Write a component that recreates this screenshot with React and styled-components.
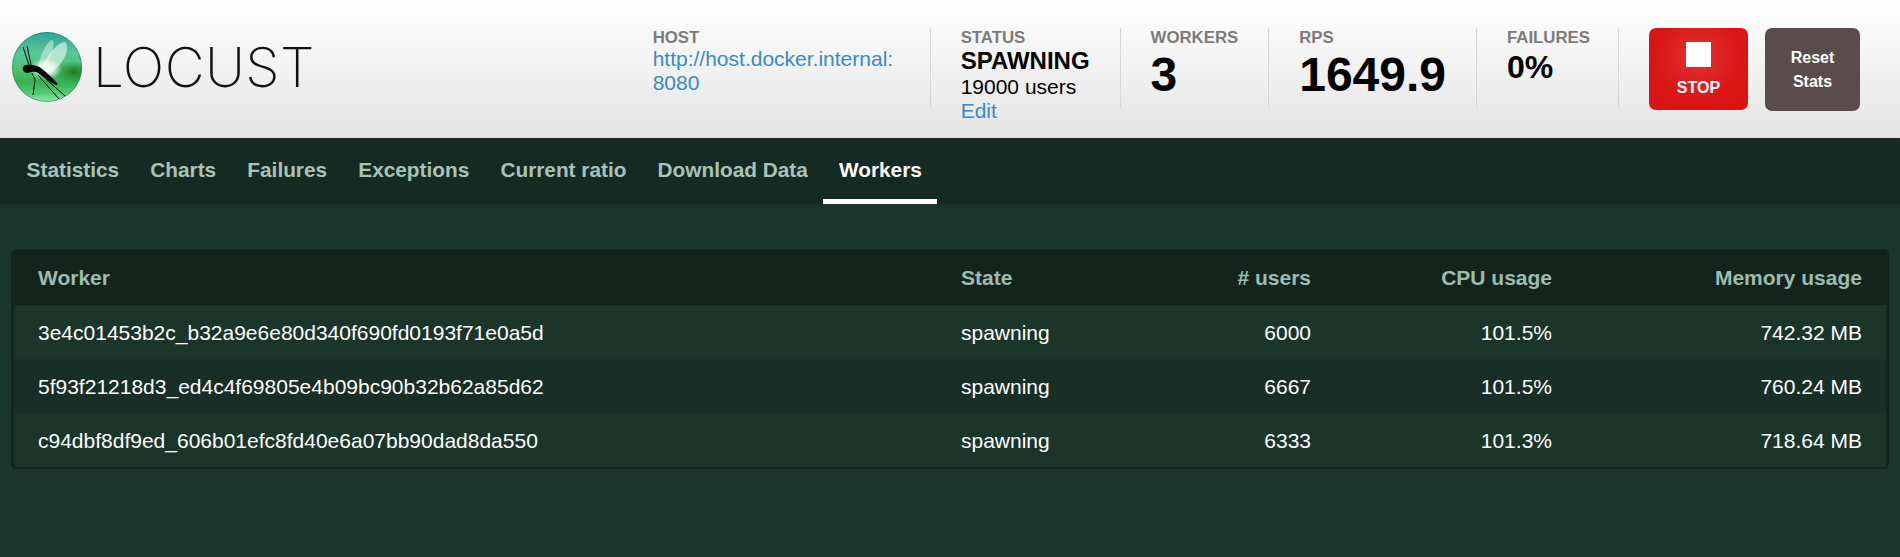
import styled, { createGlobalStyle } from "styled-components";

const GlobalStyle = createGlobalStyle`
  html, body {
    margin: 0;
    padding: 0;
    height: 100%;
    background: #1a352b;
    font-family: "Liberation Sans", Arial, sans-serif;
  }
`;

const Page = styled.div`
  min-height: 557px;
  background: #1a352b;
`;

const Header = styled.header`
  display: flex;
  height: 138px;
  padding: 28px 40px 0 12px;
  box-sizing: border-box;
  background: linear-gradient(to bottom, #ffffff 0%, #e4e4e4 100%);
`;

const Brand = styled.div`
  display: flex;
  align-items: center;
  gap: 11px;
  height: 78px;
`;

const Wordmark = styled.span`
  font-family: "Inter", "Lato", sans-serif;
  font-weight: 250;
  font-size: 55px;
  line-height: 78px;
  letter-spacing: 0.4px;
  color: #111;
`;

const Stats = styled.div`
  display: flex;
  align-items: flex-start;
  margin-left: auto;
`;

const Stat = styled.div`
  height: 80px;
  padding: 0 30px;
  border-right: 1px solid #d6d6d6;
  color: #000;
`;

const HostStat = styled(Stat)`
  width: 247px;
  padding-left: 0;
  box-sizing: content-box;
`;

const FailuresStat = styled(Stat)`
  padding-right: 28px;
`;

const Label = styled.div`
  padding-top: 1px;
  font-size: 16.8px;
  font-weight: 700;
  line-height: 18px;
  color: #7b7b7b;
`;

const Link = styled.a`
  font-size: 21px;
  line-height: 24px;
  display: block;
  color: #3a8bc4;
  text-decoration: none;
`;

const StatusName = styled.div`
  font-size: 24px;
  font-weight: 700;
  line-height: 28px;
`;

const Users = styled.div`
  font-size: 21px;
  line-height: 24px;
`;

const Value = styled.div`
  font-weight: 700;
  font-size: ${(p) => p.$size}px;
  line-height: ${(p) => p.$size + 8}px;
`;

const Buttons = styled.div`
  display: flex;
  align-items: flex-start;
  gap: 17px;
  margin-left: 30px;
`;

const StopButton = styled.button`
  display: flex;
  flex-direction: column;
  align-items: center;
  width: 99px;
  height: 82px;
  padding: 14px 0 0;
  border: 0;
  border-radius: 7px;
  background: radial-gradient(circle at 50% 35%, #e23232 0%, #d91515 60%, #d81414 100%);
  color: #fff;
  font-family: inherit;
  font-size: 16px;
  font-weight: 700;
`;

const StopSquare = styled.span`
  display: block;
  width: 25px;
  height: 25px;
  margin-bottom: 12px;
  background: #fff;
`;

const ResetButton = styled.button`
  width: 95px;
  height: 83px;
  padding: 0;
  border: 0;
  border-radius: 7px;
  background: #5a4c4c;
  color: #fff;
  font-family: inherit;
  font-size: 16px;
  font-weight: 700;
  line-height: 24px;
`;

const Nav = styled.nav`
  display: flex;
  height: 66px;
  padding-left: 11px;
  background: #152a22;
`;

const Tab = styled.a`
  display: flex;
  align-items: center;
  padding: 3px 15.6px 0;
  box-sizing: border-box;
  font-size: 20.8px;
  font-weight: 700;
  color: ${(p) => (p.$active ? "#fff" : "#a9c3b7")};
  border-bottom: 5px solid ${(p) => (p.$active ? "#fff" : "transparent")};
`;

const Content = styled.main`
  padding: 45px 11px 0 11px;
`;

const TableBox = styled.div`
  border: solid #14261f;
  border-width: 0 3px 2px 3px;
  border-radius: 5px;
  overflow: hidden;
`;

const Table = styled.table`
  width: 100%;
  border-collapse: collapse;
  table-layout: fixed;
  font-size: 21px;
`;

const Col = styled.col`
  width: ${(p) => p.$width}px;
`;

const HeadRow = styled.tr`
  height: 56px;
  background: #13241d;
`;

const Th = styled.th`
  padding: 1px 24px 0;
  font-weight: 700;
  color: #9cbcae;
  text-align: ${(p) => (p.$right ? "right" : "left")};
`;

const Row = styled.tr`
  height: 54px;
  background: ${(p) => (p.$alt ? "#182e26" : "#1b352b")};
`;

const Td = styled.td`
  padding: 1px 24px 0;
  color: #fff;
  text-align: ${(p) => (p.$right ? "right" : "left")};
`;

const tabs = ["Statistics", "Charts", "Failures", "Exceptions", "Current ratio", "Download Data", "Workers"];

const workers = [
  { id: "3e4c01453b2c_b32a9e6e80d340f690fd0193f71e0a5d", state: "spawning", users: 6000, cpu: "101.5%", mem: "742.32 MB" },
  { id: "5f93f21218d3_ed4c4f69805e4b09bc90b32b62a85d62", state: "spawning", users: 6667, cpu: "101.5%", mem: "760.24 MB" },
  { id: "c94dbf8df9ed_606b01efc8fd40e6a07bb90dad8da550", state: "spawning", users: 6333, cpu: "101.3%", mem: "718.64 MB" },
];

function Logo() {
  return (
    <svg width="70" height="70" viewBox="0 0 70 70">
      <defs>
        <linearGradient id="ball" x1="0" y1="0" x2="0" y2="1">
          <stop offset="0" stopColor="#2aa598" />
          <stop offset="0.3" stopColor="#5cc69a" />
          <stop offset="0.55" stopColor="#4cc06a" />
          <stop offset="0.72" stopColor="#36b052" />
          <stop offset="0.88" stopColor="#55cc76" />
          <stop offset="1" stopColor="#96eab0" />
        </linearGradient>
        <radialGradient id="shade" cx="0.5" cy="0.5" r="0.5">
          <stop offset="0" stopColor="#17761a" stopOpacity="0.9" />
          <stop offset="1" stopColor="#17761a" stopOpacity="0" />
        </radialGradient>
        <radialGradient id="glow" cx="0.5" cy="0.5" r="0.5">
          <stop offset="0" stopColor="#fff" stopOpacity="1" />
          <stop offset="0.5" stopColor="#fff" stopOpacity="0.7" />
          <stop offset="1" stopColor="#fff" stopOpacity="0" />
        </radialGradient>
        <clipPath id="ballClip">
          <circle cx="35" cy="35" r="35" />
        </clipPath>
      </defs>
      <circle cx="35" cy="35" r="35" fill="url(#ball)" />
      <g clipPath="url(#ballClip)">
        <ellipse cx="62" cy="40" rx="20" ry="11" fill="url(#shade)" />
      </g>
      <circle cx="35" cy="35" r="34.5" fill="none" stroke="#0f6a55" strokeOpacity="0.45" />
      <path d="M26 35 C28 24 35 9 40 8 C44 9 40 25 31 37 Z" fill="#fff" fillOpacity="0.42" />
      <path d="M29 38 C33 26 45 10 53 10 C58 13 55 30 38 41 Z" fill="#fff" fillOpacity="0.55" />
      <ellipse cx="34" cy="37" rx="16" ry="11" fill="url(#glow)" />
      <path d="M11 35 C13 32 17 33 20 33 C23 33 26 34 29 36 C34 40 40 45 44 50 C47 53 45 54 42 52 C37 49 32 46 26 41 C23 39 20 40 16 41 C12 41 10 38 11 35 Z" fill="#0a0a0a" />
      <g stroke="#0a0a0a" strokeWidth="1" fill="none">
        <path d="M17 33 L11 15" />
        <path d="M19 33 L15 14" />
        <path d="M20 41 L23 48 L21 63" />
        <path d="M26 43 L47 67" />
        <path d="M34 47 L44 56 L53 64" />
      </g>
    </svg>
  );
}

export default function App() {
  return (
    <Page>
      <GlobalStyle />
      <Header>
        <Brand>
          <Logo />
          <Wordmark>LOCUST</Wordmark>
        </Brand>
        <Stats>
          <HostStat>
            <Label>HOST</Label>
            <Link href="#">
              http://host.docker.internal:<wbr />8080
            </Link>
          </HostStat>
          <Stat>
            <Label>STATUS</Label>
            <StatusName>SPAWNING</StatusName>
            <Users>19000 users</Users>
            <Link href="#">Edit</Link>
          </Stat>
          <Stat>
            <Label>WORKERS</Label>
            <Value $size={48}>3</Value>
          </Stat>
          <Stat>
            <Label>RPS</Label>
            <Value $size={48}>1649.9</Value>
          </Stat>
          <FailuresStat>
            <Label>FAILURES</Label>
            <Value $size={32}>0%</Value>
          </FailuresStat>
          <Buttons>
            <StopButton>
              <StopSquare />
              STOP
            </StopButton>
            <ResetButton>
              Reset
              <br />
              Stats
            </ResetButton>
          </Buttons>
        </Stats>
      </Header>
      <Nav>
        {tabs.map((t) => (
          <Tab key={t} $active={t === "Workers"}>
            {t}
          </Tab>
        ))}
      </Nav>
      <Content>
        <TableBox>
          <Table>
            <colgroup>
              <Col $width={923} />
              <Col $width={200} />
              <Col $width={198} />
              <Col $width={241} />
              <Col $width={310} />
            </colgroup>
            <thead>
              <HeadRow>
                <Th>Worker</Th>
                <Th>State</Th>
                <Th $right># users</Th>
                <Th $right>CPU usage</Th>
                <Th $right>Memory usage</Th>
              </HeadRow>
            </thead>
            <tbody>
              {workers.map((w, i) => (
                <Row key={w.id} $alt={i % 2 === 1}>
                  <Td>{w.id}</Td>
                  <Td>{w.state}</Td>
                  <Td $right>{w.users}</Td>
                  <Td $right>{w.cpu}</Td>
                  <Td $right>{w.mem}</Td>
                </Row>
              ))}
            </tbody>
          </Table>
        </TableBox>
      </Content>
    </Page>
  );
}
